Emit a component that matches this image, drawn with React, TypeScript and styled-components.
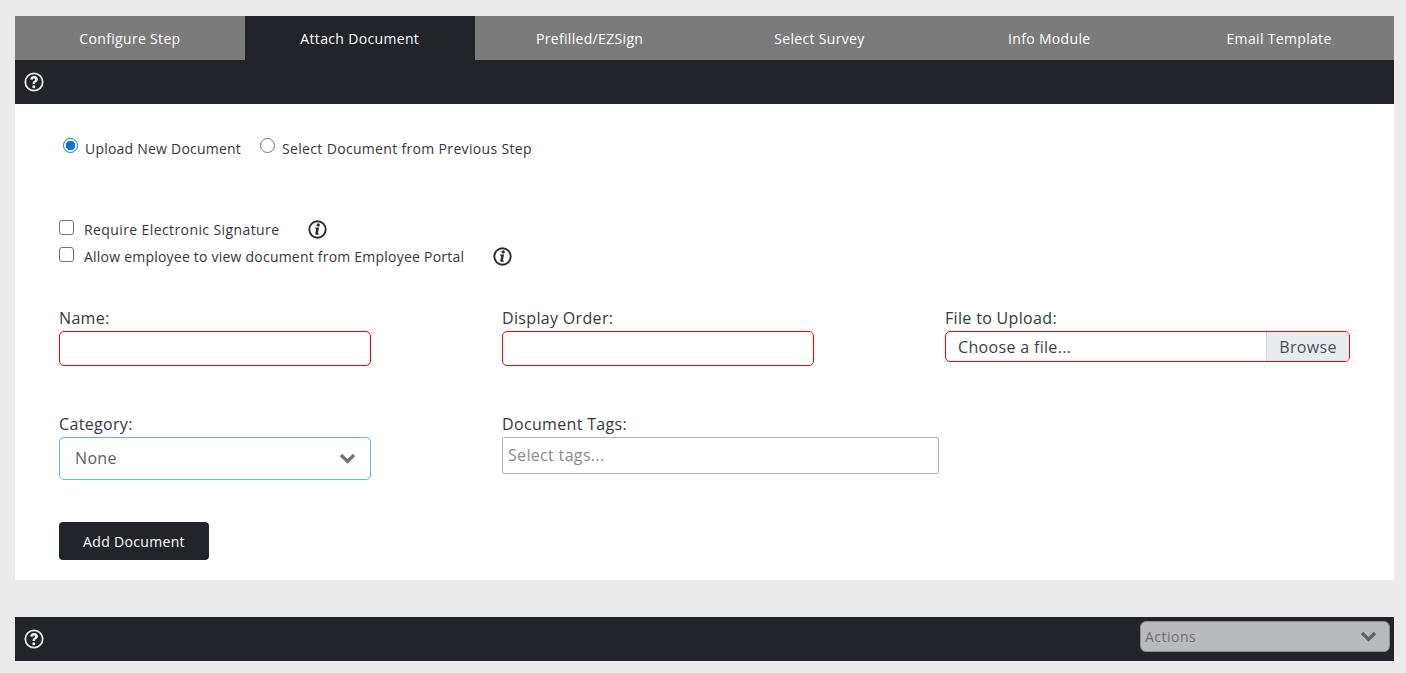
import { createGlobalStyle, styled } from 'styled-components';

const GlobalStyle = createGlobalStyle`
  html, body {
    margin: 0;
    padding: 0;
    background: #ebebeb;
    overflow: hidden;
  }
  body {
    font-family: "Open Sans", "Liberation Sans", sans-serif;
    letter-spacing: 0.33px;
    color: #212529;
  }
  * { box-sizing: border-box; }
`;

const Page = styled.div`
  height: 673px;
  padding: 16px 12px 0 15px;
`;

const Tabs = styled.div`
  display: grid;
  grid-template-columns: repeat(6, 1fr);
  height: 44px;
`;

const Tab = styled.div<{ $active?: boolean }>`
  display: flex;
  align-items: center;
  justify-content: center;
  padding-top: 1px;
  background: ${(p) => (p.$active ? '#212529' : '#7b7b7b')};
  color: #fff;
  font-size: 14px;
  font-weight: 500;
`;

const Bar = styled.div`
  display: flex;
  align-items: center;
  justify-content: space-between;
  height: 44px;
  padding: 0 4px 0 9px;
  background: #212529;
`;

const Panel = styled.div`
  height: 476px;
  padding: 32px 44px 0;
  background: #fff;
`;

const RadioRow = styled.div`
  display: flex;
  height: 26px;
  padding-left: 4px;
  gap: 19px;
`;

const RadioItem = styled.label<{ $spacing: number }>`
  display: flex;
  gap: 7px;
  font-size: 14px;
  line-height: 26px;
  letter-spacing: ${(p) => p.$spacing}px;
  color: #33383d;
`;

const Radio = styled.span<{ $on?: boolean }>`
  width: 15px;
  height: 15px;
  margin-top: 2px;
  border-radius: 50%;
  border: ${(p) => (p.$on ? '1.5px solid #0b76d8' : '1px solid #70757a')};
  background: ${(p) => (p.$on ? 'radial-gradient(circle, #0b76d8 0 4.5px, #fff 5px)' : '#fff')};
`;

const Checks = styled.div`
  display: flex;
  flex-direction: column;
  margin-top: 54px;
`;

const CheckRow = styled.label<{ $spacing: number }>`
  display: flex;
  align-items: center;
  height: 27px;
  font-size: 14px;
  letter-spacing: ${(p) => p.$spacing}px;
  color: #33383d;
`;

const CheckBox = styled.span`
  width: 15px;
  height: 15px;
  margin: -5px 10px 0 0;
  border: 1px solid #70757a;
  border-radius: 3px;
  background: #fff;
`;

const InfoWrap = styled.span`
  display: flex;
  margin-left: 29px;
`;

const FormGrid = styled.div`
  display: grid;
  grid-template-columns: 443px 443px 405px;
  grid-template-rows: 106px auto;
  margin-top: 37px;
`;

const Field = styled.div`
  display: flex;
  flex-direction: column;
  align-items: flex-start;
`;

const Label = styled.div`
  height: 23px;
  font-size: 16px;
  line-height: 23px;
  color: #33383d;
`;

const TextBox = styled.div`
  width: 312px;
  height: 35px;
  margin-top: 1px;
  border: 1px solid #f00;
  border-radius: 5px;
  background: #fff;
`;

const FileBox = styled.div`
  display: flex;
  width: 405px;
  height: 31px;
  margin-top: 1px;
  border: 1px solid #f00;
  border-radius: 5px;
  overflow: hidden;
`;

const FileText = styled.div`
  flex: 1;
  padding-left: 12px;
  font-size: 16px;
  line-height: 31px;
  color: #3a3f44;
`;

const BrowseButton = styled.div`
  width: 83px;
  border-left: 1px solid #ced4da;
  background: #e9ecef;
  font-size: 16px;
  line-height: 31px;
  text-align: center;
  color: #495057;
`;

const SelectBox = styled.div`
  display: flex;
  align-items: center;
  justify-content: space-between;
  width: 312px;
  height: 43px;
  margin-top: 1px;
  padding: 0 14px 1px 15px;
  border: 1px solid #6fb0e8;
  border-radius: 5px;
  font-size: 16px;
  color: #595f65;
`;

const TagsBox = styled.div`
  width: 437px;
  height: 37px;
  margin-top: 1px;
  padding-left: 5px;
  border: 1px solid #b5b5b5;
  border-radius: 2px;
  font-size: 16px;
  line-height: 35px;
  color: #8a8a8a;
`;

const AddButton = styled.div`
  width: 150px;
  height: 38px;
  margin-top: 42px;
  border-radius: 4px;
  background: #212529;
  color: #fff;
  font-size: 14px;
  font-weight: 500;
  line-height: 40px;
  text-align: center;
`;

const Footer = styled(Bar)`
  margin-top: 37px;
  align-items: flex-start;
`;

const HelpWrap = styled.span`
  display: flex;
  margin-top: 12px;
`;

const ActionsSelect = styled.div`
  display: flex;
  align-items: center;
  justify-content: space-between;
  width: 250px;
  height: 31px;
  margin-top: 4px;
  padding: 0 12px 1px 4px;
  border: 1px solid #8c8c8c;
  border-radius: 6px;
  background: #b9babc;
  font-size: 14px;
  letter-spacing: 0.5px;
  color: #6d7075;
`;

const HelpIcon = () => (
  <svg width="20" height="20" viewBox="0 0 20 20" style={{ display: 'block' }}>
    <circle cx="10" cy="10" r="8.7" fill="#212529" stroke="#e8e8e8" strokeWidth="1.8" />
    <path d="M6.2 7.6C6.4 5.2 8.1 4.1 10.1 4.1c2.3 0 3.8 1.3 3.8 3.2 0 1.5-.9 2.2-1.8 2.8-.8.5-1 .9-1 1.9H8.6c0-1.7.5-2.5 1.4-3.1.7-.5 1.1-.8 1.1-1.5 0-.6-.4-1-1.1-1-.8 0-1.2.4-1.3 1.3z" fill="#f6f6f6" />
    <circle cx="9.8" cy="14.7" r="1.5" fill="#f6f6f6" />
  </svg>
);

const InfoIcon = () => (
  <svg width="19" height="19" viewBox="0 0 19 19">
    <circle cx="9.5" cy="9.5" r="8.2" fill="#fff" stroke="#2b2b2b" strokeWidth="1.9" />
    <circle cx="10.2" cy="4.9" r="1.7" fill="#2b2b2b" />
    <path d="M6.9 7.5h4.2l-1.2 5.6c-.1.4.2.5 1 .3v1c-.9.3-1.9.5-2.7.3-.8-.2-1-.7-.9-1.3l.9-4.7-1.3-.2z" fill="#2b2b2b" />
  </svg>
);

const Chevron = ({ color }: { color: string }) => (
  <svg width="17" height="11" viewBox="0 0 17 11">
    <path d="M2 2l6.5 6.5L15 2" fill="none" stroke={color} strokeWidth="3.2" />
  </svg>
);

const tabs = ['Configure Step', 'Attach Document', 'Prefilled/EZSign', 'Select Survey', 'Info Module', 'Email Template'];

export default function App() {
  return (
    <Page>
      <GlobalStyle />
      <Tabs>
        {tabs.map((t) => (
          <Tab key={t} $active={t === 'Attach Document'}>
            {t}
          </Tab>
        ))}
      </Tabs>
      <Bar>
        <HelpIcon />
      </Bar>
      <Panel>
        <RadioRow>
          <RadioItem $spacing={0.22}>
            <Radio $on />
            Upload New Document
          </RadioItem>
          <RadioItem $spacing={0.33}>
            <Radio />
            Select Document from Previous Step
          </RadioItem>
        </RadioRow>
        <Checks>
          <CheckRow $spacing={0.4}>
            <CheckBox />
            Require Electronic Signature
            <InfoWrap>
              <InfoIcon />
            </InfoWrap>
          </CheckRow>
          <CheckRow $spacing={0.22}>
            <CheckBox />
            Allow employee to view document from Employee Portal
            <InfoWrap>
              <InfoIcon />
            </InfoWrap>
          </CheckRow>
        </Checks>
        <FormGrid>
          <Field>
            <Label>Name:</Label>
            <TextBox />
          </Field>
          <Field>
            <Label>Display Order:</Label>
            <TextBox />
          </Field>
          <Field>
            <Label>File to Upload:</Label>
            <FileBox>
              <FileText>Choose a file...</FileText>
              <BrowseButton>Browse</BrowseButton>
            </FileBox>
          </Field>
          <Field>
            <Label>Category:</Label>
            <SelectBox>
              None
              <Chevron color="#707478" />
            </SelectBox>
          </Field>
          <Field>
            <Label>Document Tags:</Label>
            <TagsBox>Select tags...</TagsBox>
          </Field>
        </FormGrid>
        <AddButton>Add Document</AddButton>
      </Panel>
      <Footer>
        <HelpWrap>
          <HelpIcon />
        </HelpWrap>
        <ActionsSelect>
          Actions
          <Chevron color="#5f6165" />
        </ActionsSelect>
      </Footer>
    </Page>
  );
}
